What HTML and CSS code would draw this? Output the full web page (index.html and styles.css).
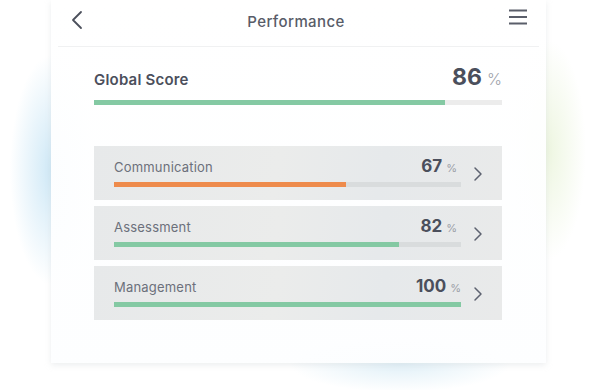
FILE: index.html
```html
<!DOCTYPE html>
<html>
<head>
<meta charset="utf-8">
<link rel="stylesheet" href="styles.css">
</head>
<body>
<div class="stage">
  <div class="card">
    <header class="topbar">
      <svg class="back" width="14" height="20" viewBox="0 0 14 20"><path d="M11 2 L3 10 L11 18" fill="none" stroke="#4b4f5b" stroke-width="1.8" stroke-linecap="round" stroke-linejoin="round"/></svg>
      <h1 class="title">Performance</h1>
      <svg class="menu" width="20" height="16" viewBox="0 0 20 16"><path d="M1 1.5 H19 M1 8 H19 M1 14.5 H19" stroke="#5a5e6a" stroke-width="2"/></svg>
    </header>
    <section class="content">
      <div class="global">
        <div class="global-head">
          <span class="global-label">Global Score</span>
          <span class="global-val">86<span class="pct">%</span></span>
        </div>
        <div class="track global-track"><div class="fill green" style="width:86%"></div></div>
      </div>
      <div class="rows">
        <div class="row">
          <div class="row-main">
            <div class="row-head"><span class="row-label">Communication</span><span class="row-val">67<span class="pct-s">%</span></span></div>
            <div class="track row-track"><div class="fill orange" style="width:67%"></div></div>
          </div>
          <svg class="chev" width="10" height="16" viewBox="0 0 10 16"><path d="M2 2 L8 8 L2 14" fill="none" stroke="#5d6270" stroke-width="1.5" stroke-linecap="round" stroke-linejoin="round"/></svg>
        </div>
        <div class="row">
          <div class="row-main">
            <div class="row-head"><span class="row-label">Assessment</span><span class="row-val">82<span class="pct-s">%</span></span></div>
            <div class="track row-track"><div class="fill green" style="width:82%"></div></div>
          </div>
          <svg class="chev" width="10" height="16" viewBox="0 0 10 16"><path d="M2 2 L8 8 L2 14" fill="none" stroke="#5d6270" stroke-width="1.5" stroke-linecap="round" stroke-linejoin="round"/></svg>
        </div>
        <div class="row">
          <div class="row-main">
            <div class="row-head"><span class="row-label">Management</span><span class="row-val full">100<span class="pct-s">%</span></span></div>
            <div class="track row-track"><div class="fill green" style="width:100%"></div></div>
          </div>
          <svg class="chev" width="10" height="16" viewBox="0 0 10 16"><path d="M2 2 L8 8 L2 14" fill="none" stroke="#5d6270" stroke-width="1.5" stroke-linecap="round" stroke-linejoin="round"/></svg>
        </div>
      </div>
    </section>
  </div>
</div>
</body>
</html>
```
FILE: styles.css
```css
* { box-sizing: border-box; }
html, body { margin: 0; padding: 0; }
body {
  width: 600px;
  height: 390px;
  overflow: hidden;
  font-family: "Inter", "Noto Sans", sans-serif;
  background:
    radial-gradient(ellipse 42px 115px at 52px 170px, rgba(180, 220, 242, 0.65), rgba(200, 230, 245, 0) 100%),
    radial-gradient(ellipse 38px 110px at 548px 150px, rgba(226, 240, 205, 0.6), rgba(230, 240, 210, 0) 100%),
    radial-gradient(ellipse 110px 28px at 400px 364px, rgba(200, 228, 242, 0.55), rgba(210, 230, 245, 0) 100%),
    #ffffff;
}
.stage {
  padding-left: 51px;
}
.card {
  width: 495px;
  height: 363px;
  background: linear-gradient(180deg, rgba(255,255,255,0.97), rgba(253,254,255,0.95));
  box-shadow: 0 2px 6px rgba(200, 205, 210, 0.35);
  display: flex;
  flex-direction: column;
}
.topbar {
  height: 47px;
  margin: 0 7px;
  border-bottom: 1px solid #f0f1f2;
  display: flex;
  align-items: center;
  justify-content: space-between;
  padding: 0 11px 0 12px;
}
.back { margin-top: -7px; }
.menu { margin-top: -12px; }
.title {
  margin: 0;
  font-size: 15px;
  font-weight: 500;
  color: #585c68;
  letter-spacing: 0.4px;
  margin-top: -4px;
}
.content {
  padding: 0 44px 0 43px;
}
.global { padding-top: 16px; }
.global-head {
  display: flex;
  justify-content: space-between;
  align-items: baseline;
  height: 31px;
}
.global-label {
  font-size: 15px;
  font-weight: 600;
  color: #4b4f5c;
  letter-spacing: 0.2px;
}
.global-val {
  font-size: 23px;
  font-weight: 700;
  color: #4b4f5c;
}
.pct {
  font-size: 16px;
  font-weight: 300;
  color: #9ea2aa;
  margin-left: 5px;
}
.track { position: relative; overflow: hidden; }
.global-track {
  margin-top: 6px;
  height: 5px;
  background: #ececec;
}
.fill { height: 100%; }
.green { background: #84c9a3; }
.orange { background: #ee8b4c; }
.rows {
  margin-top: 41px;
  display: flex;
  flex-direction: column;
  gap: 6px;
}
.row {
  height: 54px;
  background: linear-gradient(100deg, #e7e9ea 0%, #ebeceb 45%, #e6e9eb 70%, #e9eaea 100%);
  display: flex;
  align-items: center;
  padding: 0 18px 0 20px;
}
.row-main {
  width: 347px;
  margin-top: -4px;
}
.row-head {
  display: flex;
  justify-content: space-between;
  align-items: baseline;
  height: 26px;
  padding-right: 4px;
}
.row-label {
  font-size: 13px;
  font-weight: 400;
  color: #6c707b;
  letter-spacing: 0.2px;
}
.row-val {
  font-size: 17px;
  font-weight: 700;
  color: #4b4f5c;
}
.row-val.full { margin-right: -4px; }
.pct-s {
  font-size: 11px;
  font-weight: 400;
  color: #9a9ea6;
  margin-left: 4px;
}
.row-track {
  height: 5px;
  background: #d9dcdd;
  margin-top: 0;
}
.chev {
  margin-left: 12px;
  margin-top: 2px;
}
```
